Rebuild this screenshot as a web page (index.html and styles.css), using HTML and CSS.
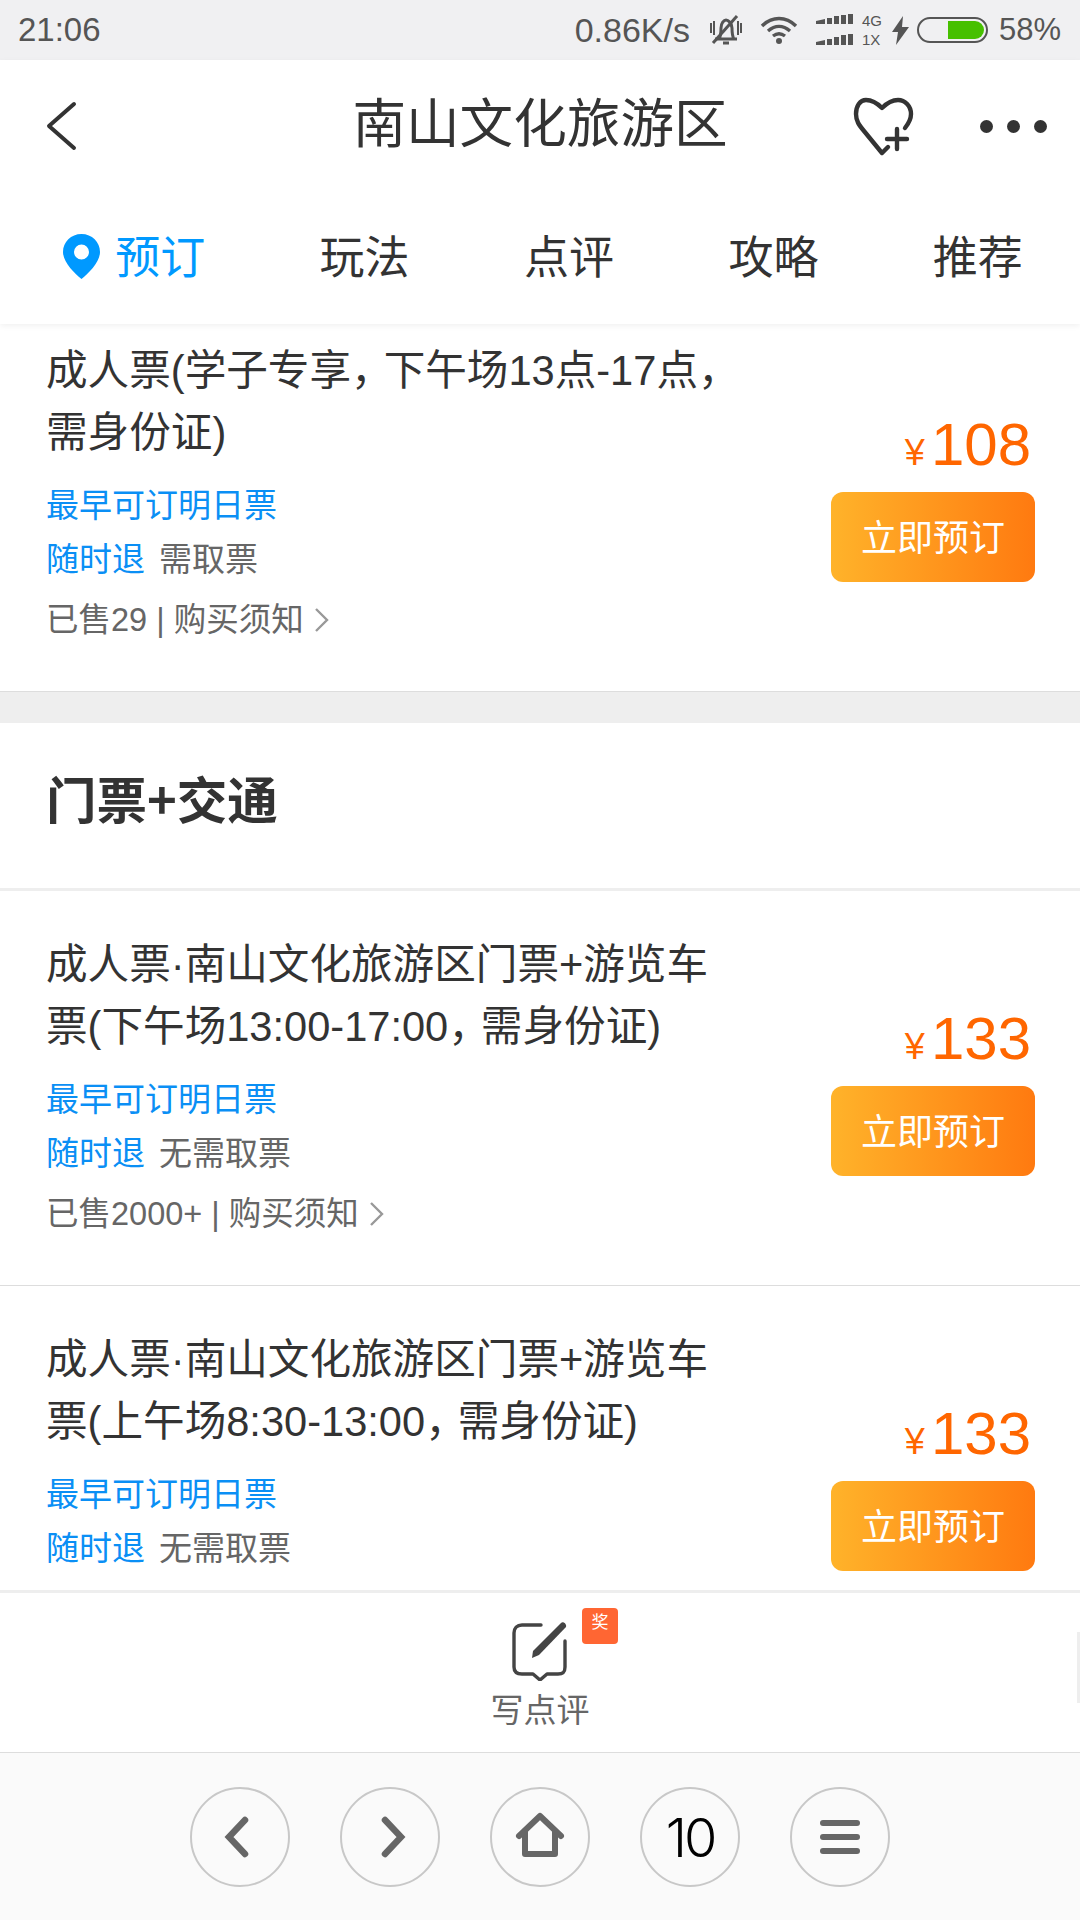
FILE: index.html
```html
<!DOCTYPE html>
<html lang="zh-CN">
<head>
<meta charset="utf-8">
<title>南山文化旅游区</title>
<link rel="stylesheet" href="styles.css">
</head>
<body>
<div class="app">
  <div class="status">
    <span class="clock">21:06</span>
    <div class="status-right">
      <span class="speed">0.86K/s</span>
      <svg class="ic-bell" width="34" height="32" viewBox="0 0 34 32"><path d="M6 25h22M10 25c2-3 2-6 2-11 0-5 3-8 5-8s6 3 6 8c0 5 0 8 2 11M14 29h6" fill="none" stroke="#555" stroke-width="3"/><path d="M2 9v10M32 9v10M5 7v14M29 7v14" stroke="#555" stroke-width="2"/><path d="M4 29L28 2" stroke="#555" stroke-width="3"/></svg>
      <svg class="ic-wifi" width="38" height="28" viewBox="0 0 38 28"><path d="M2 10c10-10 24-10 34 0M8 15c7-6 15-6 22 0M13 20c4-3 8-3 12 0" fill="none" stroke="#555" stroke-width="3.4"/><circle cx="19" cy="25" r="3" fill="#555"/></svg>
      <svg class="ic-signal" width="37" height="32" viewBox="0 0 37 32"><path d="M0 7l9-2v5H0zM11 4h5v6h-5zM18 2h5v8h-5zM25 1h5v9h-5zM32 0h5v10h-5zM0 28l9-2v5H0zM11 25h5v6h-5zM18 23h5v8h-5zM25 21h5v10h-5zM32 20h5v11h-5z" fill="#555"/></svg>
      <div class="net"><span>4G</span><span>1X</span></div>
      <svg class="ic-bolt" width="17" height="29" viewBox="0 0 17 29"><path d="M11 0L0 16h6L4 29 17 11h-7z" fill="#555"/></svg>
      <div class="battery"><div class="battery-fill"></div></div>
      <span class="pct">58%</span>
    </div>
  </div>

  <header class="header">
    <div class="titlebar">
      <svg class="ic-back" width="34" height="50" viewBox="0 0 34 50"><path d="M30 3L5 25l25 22" fill="none" stroke="#333" stroke-width="4" stroke-linecap="round" stroke-linejoin="round"/></svg>
      <h1 class="title">南山文化旅游区</h1>
      <div class="actions">
        <svg class="ic-heart" width="64" height="60" viewBox="0 0 64 60"><path d="M54 31C58 26 60 21 60 17 60 9 54 3 47 3 40 3 35 7 31 11 27 7 22 3 15 3 9 3 5 9 5 17c0 7 3 11 8 17l18 22 6-6" fill="none" stroke="#333" stroke-width="4.4" stroke-linecap="round" stroke-linejoin="round"/><path d="M36 42h20M46 32v20" fill="none" stroke="#333" stroke-width="4.4" stroke-linecap="round"/></svg>
        <div class="dots"><i></i><i></i><i></i></div>
      </div>
    </div>
    <nav class="tabs">
      <div class="tab active"><span class="tab-label"><svg class="ic-pin" width="37" height="45" viewBox="0 0 37 45"><path fill-rule="evenodd" d="M18.5 0C8 0 0 8 0 18c0 10 11 21 18.500 27C26 39 37 28 37 18 37 8 29 0 18.500 0zm0 10.500a7.500 7.500 0 1 1 0 15 7.500 7.500 0 0 1 0-15z" fill="#0099ff"/></svg>预订</span></div>
      <div class="tab"><span class="tab-label">玩法</span></div>
      <div class="tab"><span class="tab-label">点评</span></div>
      <div class="tab"><span class="tab-label">攻略</span></div>
      <div class="tab"><span class="tab-label">推荐</span></div>
    </nav>
  </header>

  <main class="scroller">
    <div class="list">
      <article class="item">
        <div class="info">
          <div class="name">成人票(学子专享<span class="comma">，</span>下午场13点-17点<span class="comma">，</span><br>需身份证)</div>
          <div class="meta first blue">最早可订明日票</div>
          <div class="meta"><span class="blue">随时退</span><span class="ticket">需取票</span></div>
          <div class="sold">已售29 | 购买须知<svg class="ic-more" width="16" height="26" viewBox="0 0 16 26"><path d="M2 2l11 11L2 24" fill="none" stroke="#999" stroke-width="2.400"/></svg></div>
        </div>
        <div class="buy">
          <div class="price"><span class="yen">¥</span>108</div>
          <button class="book">立即预订</button>
        </div>
      </article>

      <div class="gap"></div>

      <h2 class="section">门票+交通</h2>

      <article class="item">
        <div class="info">
          <div class="name">成人票·南山文化旅游区门票+游览车<br>票(下午场13:00-17:00<span class="comma">，</span>需身份证)</div>
          <div class="meta first blue">最早可订明日票</div>
          <div class="meta"><span class="blue">随时退</span><span class="ticket">无需取票</span></div>
          <div class="sold">已售2000+ | 购买须知<svg class="ic-more" width="16" height="26" viewBox="0 0 16 26"><path d="M2 2l11 11L2 24" fill="none" stroke="#999" stroke-width="2.400"/></svg></div>
        </div>
        <div class="buy">
          <div class="price"><span class="yen">¥</span>133</div>
          <button class="book">立即预订</button>
        </div>
      </article>

      <article class="item">
        <div class="info">
          <div class="name">成人票·南山文化旅游区门票+游览车<br>票(上午场8:30-13:00<span class="comma">，</span>需身份证)</div>
          <div class="meta first blue">最早可订明日票</div>
          <div class="meta"><span class="blue">随时退</span><span class="ticket">无需取票</span></div>
        </div>
        <div class="buy">
          <div class="price"><span class="yen">¥</span>133</div>
          <button class="book">立即预订</button>
        </div>
      </article>
    </div>
  </main>

  <div class="review">
    <div class="review-icon">
      <svg width="58" height="60" viewBox="0 0 58 60"><path d="M30 4H11C6 4 3 7 3 12v34c0 5 3 7 8 7h11l7 6 7-6h11c5 0 7-2 7-7V20" fill="none" stroke="#444" stroke-width="3.400" stroke-linejoin="round" stroke-linecap="round"/><path d="M50 2c2-2 6 1 5 4L28 34l-7 3 1-7z" fill="#444"/></svg>
      <span class="badge">奖</span>
    </div>
    <span class="review-label">写点评</span>
    <span class="scrollbar"></span>
  </div>

  <footer class="browser">
    <div class="circle"><svg width="36" height="50" viewBox="0 0 36 50"><path d="M23 8L7 25l16 17" fill="none" stroke="#666" stroke-width="6.500" stroke-linecap="round"/></svg></div>
    <div class="circle"><svg width="36" height="50" viewBox="0 0 36 50"><path d="M13 8l16 17-16 17" fill="none" stroke="#666" stroke-width="6.500" stroke-linecap="round"/></svg></div>
    <div class="circle"><svg width="50" height="50" viewBox="0 0 50 50"><path d="M4 24L25 4l21 20M10 20v22h30V20" fill="none" stroke="#666" stroke-width="6" stroke-linejoin="round" stroke-linecap="round"/></svg></div>
    <div class="circle tabs-count">10</div>
    <div class="circle menu"><i></i><i></i><i></i></div>
  </footer>
</div>
</body>
</html>
```
FILE: styles.css
```css
* { box-sizing: border-box; }
html, body { margin: 0; padding: 0; }
body {
  width: 1080px;
  height: 1920px;
  overflow: hidden;
  background: #fff;
  font-family: "Liberation Sans", "Noto Sans CJK SC", sans-serif;
  color: #333;
}
.app { display: flex; flex-direction: column; height: 1920px; }

.status {
  height: 60px;
  flex: none;
  background: #f0f0f2;
  display: flex;
  align-items: center;
  justify-content: space-between;
  padding: 0 19px 0 18px;
  color: #555;
  font-size: 33px;
}
.status-right { display: flex; align-items: center; }
.speed { margin-right: 19px; font-size: 34px; }
.pct { font-size: 31px; }
.ic-bell { margin-right: 17px; }
.ic-wifi { margin-right: 18px; }
.ic-signal { margin-right: 9px; }
.net {
  width: 24px;
  display: flex;
  flex-direction: column;
  font-size: 15px;
  line-height: 19px;
  margin-right: 6px;
}
.ic-bolt { margin-right: 8px; }
.battery {
  width: 71px;
  height: 26px;
  border: 2px solid #555;
  border-radius: 13px;
  padding: 2px 2px 2px 29px;
  margin-right: 11px;
}
.battery-fill { height: 100%; background: #46c000; border-radius: 0 9px 9px 0; }

.header {
  flex: none;
  background: #fff;
  position: relative;
  z-index: 2;
  box-shadow: 0 2px 6px rgba(0, 0, 0, 0.06);
}
.titlebar {
  height: 126px;
  display: grid;
  grid-template-columns: 1fr auto 1fr;
  align-items: center;
  padding: 0 33px;
}
.ic-back { margin: 6px 0 0 11px; }
.title {
  margin: 0;
  font-size: 53.6px;
  font-weight: 400;
  line-height: 70px;
  color: #333;
  padding-top: 1px;
}
.actions { display: flex; justify-content: flex-end; align-items: center; gap: 65px; }
.ic-heart { margin-top: 8px; }
.dots { display: flex; gap: 14px; margin-top: 6px; }
.dots i { width: 13px; height: 13px; border-radius: 50%; background: #333; }

.tabs {
  height: 138px;
  display: grid;
  grid-template-columns: repeat(5, 1fr);
  padding: 7px 0 0 58px;
  align-items: center;
}
.tab { text-align: center; font-size: 45px; line-height: 60px; color: #333; }
.tab-label { position: relative; display: inline-block; }
.tab.active { color: #0099ff; }
.ic-pin { position: absolute; right: 100%; top: 5px; margin-right: 15px; }

.scroller { flex: 1; min-height: 0; overflow: hidden; }
.list { margin-top: -27px; }

.item {
  display: flex;
  justify-content: space-between;
  align-items: flex-start;
  padding: 43px 45px 44px 46px;
  border-bottom: 1px solid #ddd;
  background: #fff;
}
.info { flex: none; }
.name { font-size: 41.6px; line-height: 62px; color: #333; white-space: nowrap; }
.comma { letter-spacing: -9px; }
.meta { font-size: 33px; line-height: 54px; color: #666; }
.meta.first { margin-top: 15px; }
.blue { color: #0a8ff5; }
.meta.blue { color: #0a8ff5; }
.ticket { margin-left: 14px; }
.sold {
  font-size: 32.5px;
  line-height: 54px;
  margin-top: 6px;
  color: #666;
  display: flex;
  align-items: center;
}
.ic-more { margin-left: 10px; }

.buy { display: flex; flex-direction: column; align-items: flex-end; padding-top: 70px; }
.price { font-size: 60px; line-height: 70px; color: #ff6600; margin-right: 4px; margin-bottom: 4px; }
.yen { font-size: 36px; margin-right: 6px; }
.book {
  width: 204px;
  height: 90px;
  border: 0;
  padding: 0 0 5px;
  border-radius: 12px;
  background: linear-gradient(90deg, #ffb32a, #ff7a10);
  color: #fff;
  font-family: inherit;
  font-size: 36px;
}

.gap { height: 31px; background: #eee; }
.section {
  margin: 0;
  height: 168px;
  display: flex;
  align-items: center;
  padding: 0 0 17px 46px;
  font-family: "Noto Sans CJK SC", sans-serif;
  font-size: 50.5px;
  font-weight: 700;
  color: #333;
  background: #fff;
  border-bottom: 3px solid #eee;
}

.review {
  flex: none;
  height: 163px;
  background: #fff;
  border-top: 3px solid #eee;
  border-bottom: 1px solid #ddd;
  position: relative;
  display: flex;
  flex-direction: column;
  align-items: center;
  padding-top: 28px;
}
.review-icon { position: relative; width: 58px; height: 60px; }
.review-icon svg { display: block; }
.badge {
  position: absolute;
  left: 71px;
  top: -13px;
  width: 36px;
  height: 36px;
  border-radius: 4px;
  background: #ff6633;
  color: #fff;
  font-size: 17px;
  line-height: 30px;
  text-align: center;
}
.review-label { font-size: 33px; line-height: 42px; margin-top: 9px; color: #666; }
.scrollbar {
  position: absolute;
  right: 0;
  top: 39px;
  width: 3px;
  height: 71px;
  background: #eee;
}

.browser {
  flex: none;
  height: 167px;
  background: #fafafa;
  display: flex;
  justify-content: center;
  gap: 50px;
  padding-top: 34px;
}
.circle {
  width: 100px;
  height: 100px;
  border: 2px solid #c8c8c8;
  border-radius: 50%;
  display: flex;
  align-items: center;
  justify-content: center;
}
.tabs-count { font-family: Inter, sans-serif; font-weight: 300; font-size: 54px; color: #000; letter-spacing: -3px; }
.menu { flex-direction: column; gap: 8px; }
.menu i { width: 40px; height: 6px; border-radius: 3px; background: #666; }
```
